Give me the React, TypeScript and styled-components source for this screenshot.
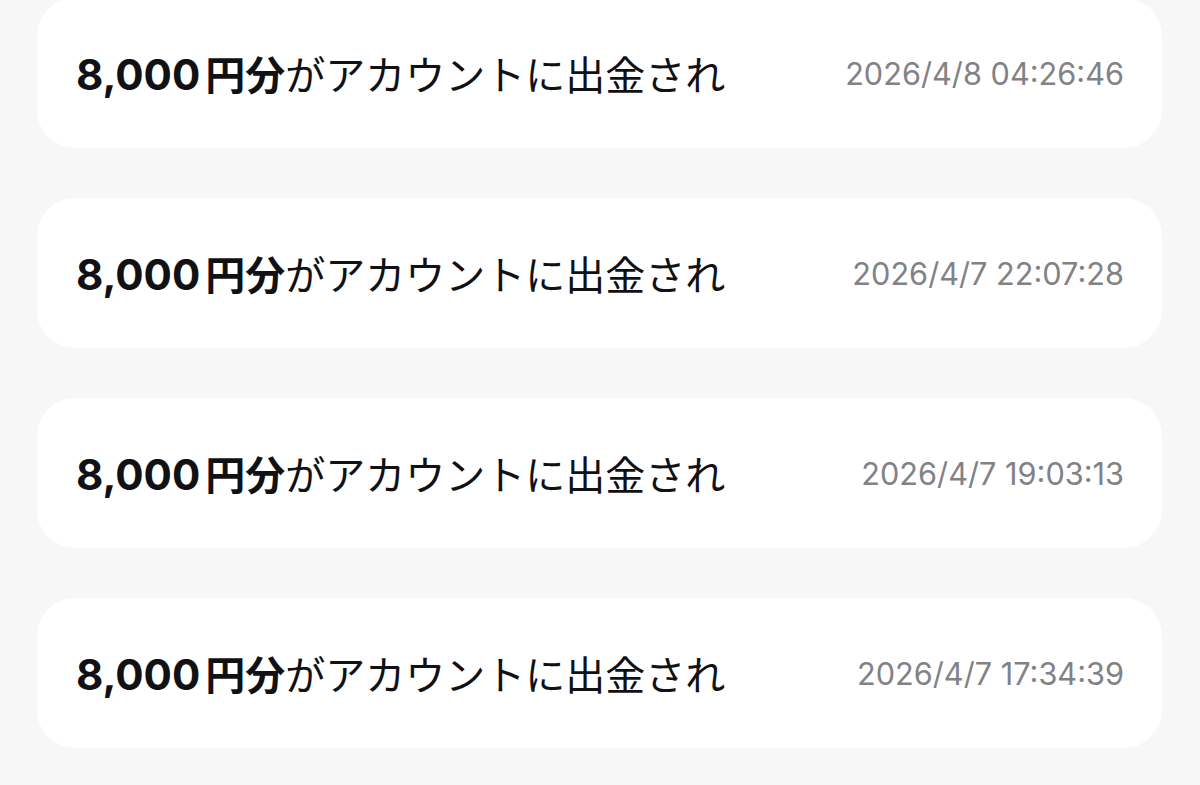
import React from "react";
import styled, { createGlobalStyle } from "styled-components";

const Global = createGlobalStyle`
  html, body {
    margin: 0;
    padding: 0;
    background: #f7f7f7;
  }
  body {
    font-family: "Inter", "Noto Sans CJK JP", sans-serif;
    overflow: hidden;
  }
`;

const List = styled.div`
  display: flex;
  flex-direction: column;
  gap: 50px;
  margin-top: -2px;
  padding: 0 38px 0 37px;
`;

const Card = styled.div`
  height: 150px;
  background: #ffffff;
  border-radius: 38px;
  display: flex;
  align-items: center;
  justify-content: space-between;
  padding: 0 38px 0 39px;
  box-sizing: border-box;
`;

const Title = styled.div`
  font-family: "Inter", "Noto Sans CJK JP", sans-serif;
  font-size: 40px;
  color: #111114;
  white-space: nowrap;
  display: flex;
  align-items: baseline;
`;

const Strong = styled.span`
  font-weight: 700;
`;

const Amount = styled.span`
  font-size: 42px;
  margin-right: 5px;
`;

const Time = styled.div`
  font-family: "Inter", "Noto Sans CJK JP", sans-serif;
  font-size: 30.7px;
  color: #828286;
  white-space: nowrap;
`;

const rows = [
  "2026/4/8 04:26:46",
  "2026/4/7 22:07:28",
  "2026/4/7 19:03:13",
  "2026/4/7 17:34:39",
];

export default function App() {
  return (
    <>
      <Global />
      <List>
        {rows.map((t) => (
          <Card key={t}>
            <Title>
              <Strong>
                <Amount>8,000</Amount>円分
              </Strong>
              がアカウントに出金され
            </Title>
            <Time>{t}</Time>
          </Card>
        ))}
      </List>
    </>
  );
}
